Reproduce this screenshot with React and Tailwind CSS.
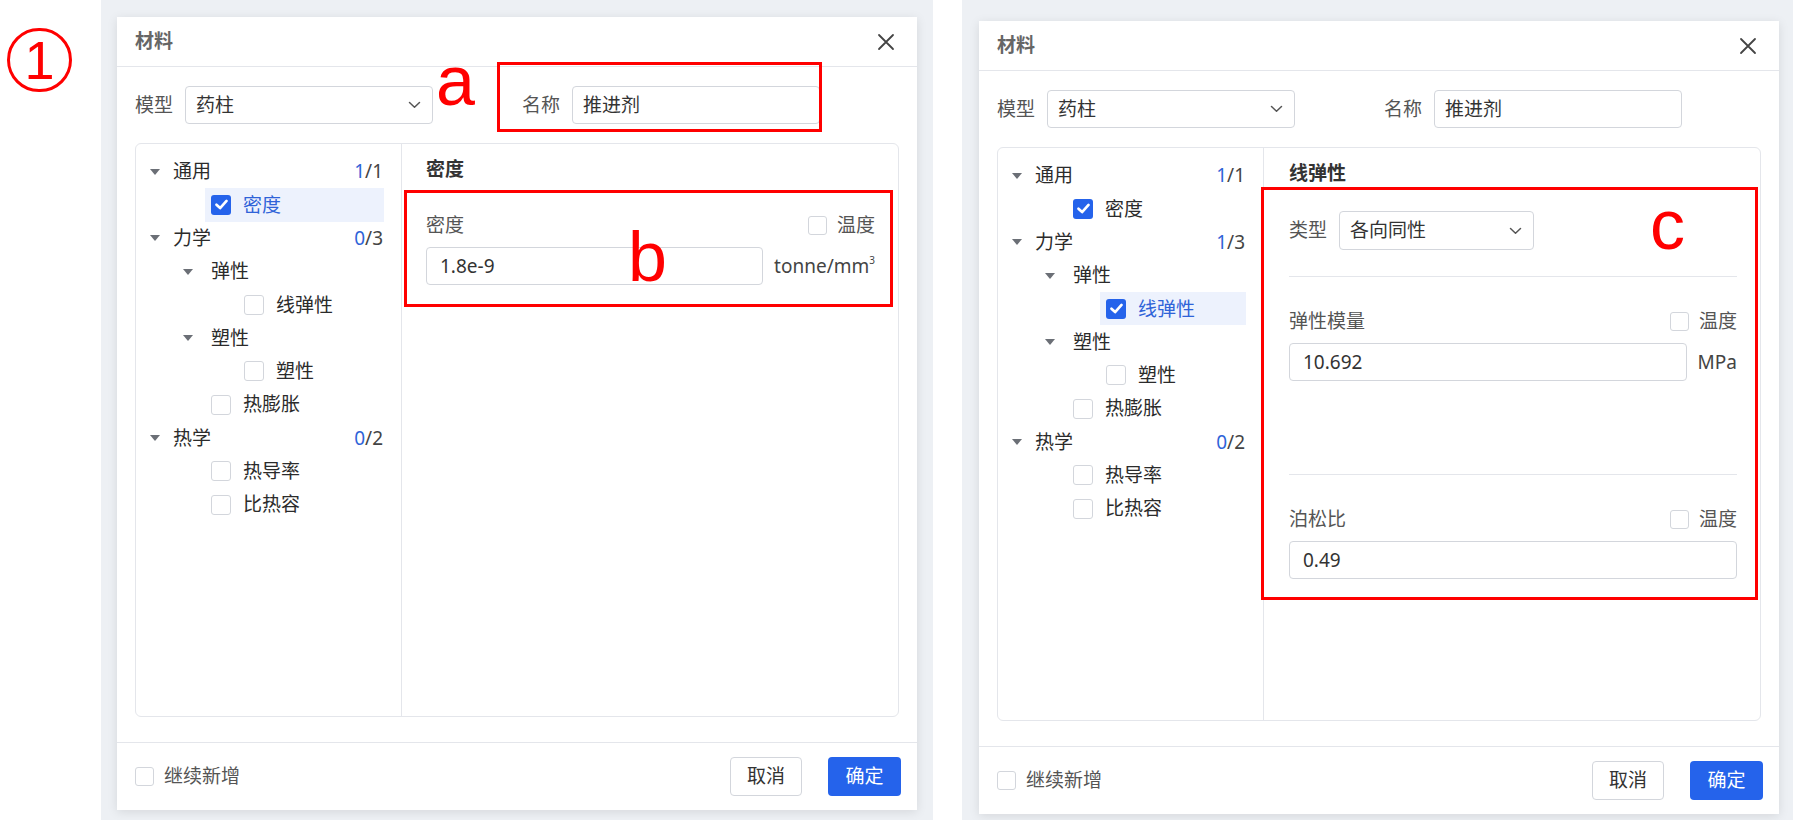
import React from "react";

const RED = "border-[#ff0000]";

function Box({ checked, size = "w-[20px] h-[20px]" }) {
  if (checked) {
    return (
      <span className={`${size} shrink-0 rounded-[3px] bg-[#2563eb] flex items-center justify-center`}>
        <svg width="15" height="15" viewBox="0 0 14 14" fill="none">
          <path d="M2.3 7.2 L5.7 10.3 L11.7 3.7" stroke="white" strokeWidth="2.5" strokeLinecap="round" strokeLinejoin="round" />
        </svg>
      </span>
    );
  }
  return <span className={`${size} shrink-0 rounded-[3px] border border-[#d3d6dc] bg-white`} />;
}

function Caret() {
  return (
    <svg width="10" height="6" viewBox="0 0 10 6" className="shrink-0">
      <path d="M0 0 L10 0 L5 6 Z" fill="#6b6f76" />
    </svg>
  );
}

function Chevron() {
  return (
    <svg width="13" height="8" viewBox="0 0 13 8" fill="none">
      <path d="M1.5 1.5 L6.5 6.2 L11.5 1.5" stroke="#555" strokeWidth="1.5" strokeLinecap="round" strokeLinejoin="round" />
    </svg>
  );
}

function GroupRow({ level, label, count }) {
  const pad = level === 0 ? "pl-[14px]" : "pl-[47px]";
  const gap = level === 0 ? "w-[13px]" : "w-[18px]";
  const [done, total] = count ? count.split("/") : [];
  return (
    <div className={`flex items-center h-[33.3px] pr-[18px] ${pad}`}>
      <Caret />
      <span className={gap} />
      <span className="text-[#2b2b2b]">{label}</span>
      {count && (
        <span className="ml-auto">
          <span className="text-[#2f63d8]">{done}</span>
          <span className="text-[#444]">/{total}</span>
        </span>
      )}
    </div>
  );
}

function LeafRow({ level, label, checked, selected }) {
  const pad = level === 1 ? "pl-[69px]" : "pl-[102px]";
  return (
    <div className={`pr-[17px] ${pad}`}>
      <div className={`flex items-center h-[33.3px] pl-[6px] ${selected ? "bg-[#edf2fd]" : ""}`}>
        <Box checked={checked} />
        <span className={`ml-[12px] ${selected ? "text-[#2f63d8]" : "text-[#2b2b2b]"}`}>{label}</span>
      </div>
    </div>
  );
}

function Tree({ rows }) {
  return (
    <div className="w-[266px] shrink-0 border-r border-[#e4e6eb] pt-[11px]">
      {rows.map((r, i) =>
        r.group ? (
          <GroupRow key={i} level={r.level} label={r.label} count={r.count} />
        ) : (
          <LeafRow key={i} level={r.level} label={r.label} checked={r.checked} selected={r.selected} />
        )
      )}
    </div>
  );
}

function TempCheck() {
  return (
    <span className="flex items-center">
      <Box size="w-[19px] h-[19px]" />
      <span className="ml-[10px] text-[#555]">温度</span>
    </span>
  );
}

function Field({ label, value, unit, temp = true }) {
  return (
    <div>
      <div className="flex items-center justify-between h-[26px]">
        <span className="text-[#555]">{label}</span>
        {temp && <TempCheck />}
      </div>
      <div className="mt-[9px] flex items-center">
        <div className="h-[38px] flex-1 border border-[#d3d6dc] rounded-[4px] px-[13px] flex items-center text-[#333]">
          {value}
        </div>
        {unit && <span className="ml-[11px] text-[#444]">{unit}</span>}
      </div>
    </div>
  );
}

function DensityPanel() {
  return (
    <div className="flex-1 pl-[24px] pr-[23px] pt-[12px]">
      <div className="font-bold leading-[26px] text-[#333]">密度</div>
      <div className="mt-[30px]">
        <Field
          label="密度"
          value="1.8e-9"
          unit={
            <span>
              tonne/mm<sup className="text-[10px] -top-[0.9em]">3</sup>
            </span>
          }
        />
      </div>
    </div>
  );
}

function ElasticPanel() {
  return (
    <div className="flex-1 pl-[25px] pr-[23px] pt-[12px]">
      <div className="font-bold leading-[26px] text-[#333]">线弹性</div>
      <div className="mt-[25px] flex items-center">
        <span className="w-[50px] text-[#555]">类型</span>
        <div className="w-[195px] h-[39px] border border-[#d3d6dc] rounded-[4px] pl-[10px] pr-[11px] flex items-center justify-between text-[#333]">
          <span>各向同性</span>
          <Chevron />
        </div>
      </div>
      <div className="mt-[26px] h-px bg-[#e4e6eb]" />
      <div className="mt-[31px]">
        <Field label="弹性模量" value="10.692" unit="MPa" />
      </div>
      <div className="mt-[93px] h-px bg-[#e4e6eb]" />
      <div className="mt-[31px]">
        <Field label="泊松比" value="0.49" />
      </div>
    </div>
  );
}

function Dialog({ variant, tree }) {
  return (
    <div className="relative w-[800px] h-[793px] bg-white shadow-[0_2px_10px_rgba(0,0,0,0.10)] flex flex-col">
      <div className="h-[50px] shrink-0 border-b border-[#e4e6eb] pl-[18px] pr-[22px] flex items-center justify-between">
        <span className="font-semibold text-[#666]">材料</span>
        <svg width="18" height="18" viewBox="0 0 18 18">
          <path d="M2 2 L16 16 M16 2 L2 16" stroke="#444" strokeWidth="1.8" strokeLinecap="round" />
        </svg>
      </div>

      <div className="flex-1 px-[18px] pt-[19px] pb-[25px] flex flex-col">
        <div className="flex items-center h-[38px]">
          <span className="w-[50px] text-[#555]">模型</span>
          <div className="w-[248px] h-[38px] border border-[#d3d6dc] rounded-[4px] pl-[10px] pr-[11px] flex items-center justify-between text-[#333]">
            <span>药柱</span>
            <Chevron />
          </div>
          <span className="ml-[89px] w-[50px] text-[#555]">名称</span>
          <div className="w-[248px] h-[38px] border border-[#d3d6dc] rounded-[4px] pl-[10px] flex items-center text-[#333]">
            推进剂
          </div>
        </div>

        <div className="mt-[19px] flex-1 border border-[#e4e6eb] rounded-[6px] flex">
          <Tree rows={tree} />
          {variant === "a" ? <DensityPanel /> : <ElasticPanel />}
        </div>
      </div>

      <div className="h-[68px] shrink-0 border-t border-[#e4e6eb] pl-[18px] pr-[16px] flex items-center justify-between">
        <span className="flex items-center">
          <Box size="w-[19px] h-[19px]" />
          <span className="ml-[10px] text-[#555]">继续新增</span>
        </span>
        <div className="flex items-center gap-[26px]">
          <button className="w-[72px] h-[39px] border border-[#d3d6dc] rounded-[4px] bg-white text-[#333]">取消</button>
          <button className="w-[73px] h-[39px] rounded-[4px] bg-[#2563eb] text-white">确定</button>
        </div>
      </div>

      {variant === "a" && (
        <>
          <div className={`absolute left-[380px] top-[45px] w-[325px] h-[70px] border-[3px] ${RED}`} />
          <div className={`absolute left-[287px] top-[173px] w-[489px] h-[117px] border-[3px] ${RED}`} />
          <span className="absolute left-[319px] top-[29px] text-[70px] leading-none text-[#ff0000] font-['Liberation_Sans',sans-serif]">a</span>
          <span className="absolute left-[511px] top-[205px] text-[70px] leading-none text-[#ff0000] font-['Liberation_Sans',sans-serif]">b</span>
        </>
      )}
      {variant === "c" && (
        <>
          <div className={`absolute left-[282px] top-[166px] w-[497px] h-[413px] border-[3px] ${RED}`} />
          <span className="absolute left-[671px] top-[169px] text-[70px] leading-none text-[#ff0000] font-['Liberation_Sans',sans-serif]">c</span>
        </>
      )}
    </div>
  );
}

const treeA = [
  { group: true, level: 0, label: "通用", count: "1/1" },
  { level: 1, label: "密度", checked: true, selected: true },
  { group: true, level: 0, label: "力学", count: "0/3" },
  { group: true, level: 1, label: "弹性" },
  { level: 2, label: "线弹性" },
  { group: true, level: 1, label: "塑性" },
  { level: 2, label: "塑性" },
  { level: 1, label: "热膨胀" },
  { group: true, level: 0, label: "热学", count: "0/2" },
  { level: 1, label: "热导率" },
  { level: 1, label: "比热容" },
];

const treeC = [
  { group: true, level: 0, label: "通用", count: "1/1" },
  { level: 1, label: "密度", checked: true },
  { group: true, level: 0, label: "力学", count: "1/3" },
  { group: true, level: 1, label: "弹性" },
  { level: 2, label: "线弹性", checked: true, selected: true },
  { group: true, level: 1, label: "塑性" },
  { level: 2, label: "塑性" },
  { level: 1, label: "热膨胀" },
  { group: true, level: 0, label: "热学", count: "0/2" },
  { level: 1, label: "热导率" },
  { level: 1, label: "比热容" },
];

export default function App() {
  return (
    <div className="w-[1796px] h-[820px] bg-white flex text-[19px] font-['Noto_Sans','Noto_Sans_CJK_SC',sans-serif]">
      <div className="w-[101px] shrink-0 pt-[28px] pl-[7px]">
        <div className="w-[65px] h-[64px] rounded-full border-[3px] border-[#ff0000] flex items-center justify-center text-[#ff0000] text-[54px] leading-none font-['Liberation_Sans',sans-serif]">
          1
        </div>
      </div>
      <div className="w-[832px] shrink-0 h-full bg-[#edf0f4] pl-[16px] pt-[17px]">
        <Dialog variant="a" tree={treeA} />
      </div>
      <div className="w-[29px] shrink-0" />
      <div className="w-[831px] shrink-0 h-full bg-[#edf0f4] pl-[17px] pt-[21px]">
        <Dialog variant="c" tree={treeC} />
      </div>
    </div>
  );
}
